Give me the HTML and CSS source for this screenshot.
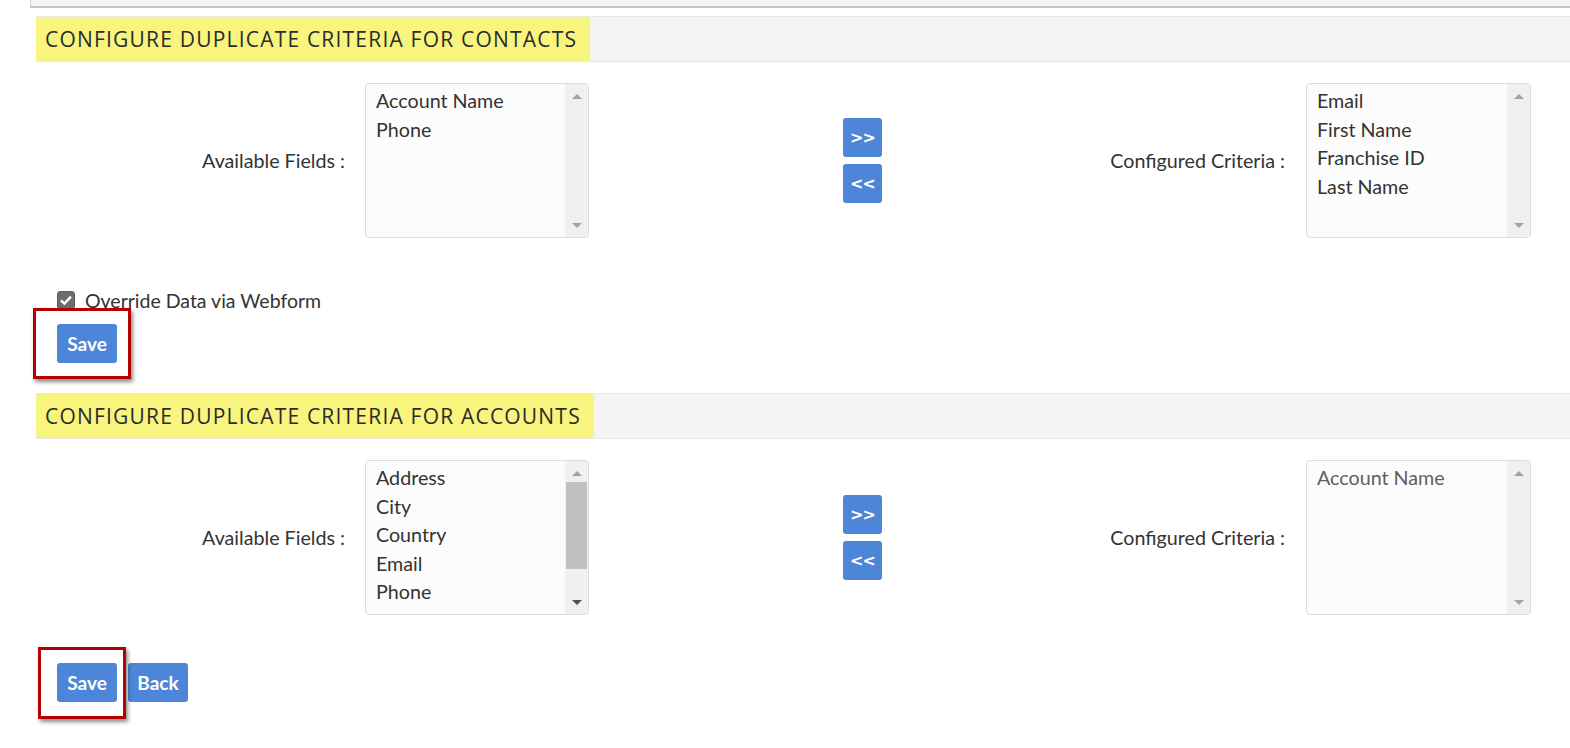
FILE: index.html
```html
<!DOCTYPE html>
<html>
<head>
<meta charset="utf-8">
<link rel="stylesheet" href="styles.css">
</head>
<body>
<div class="topstrip"></div>
<div class="page">
  <div class="header"><span class="hl">CONFIGURE DUPLICATE CRITERIA FOR CONTACTS</span></div>
  <div class="row">
    <div class="label left-label">Available Fields :</div>
    <div class="listbox">
      <div class="items">
        <div class="opt">Account Name</div>
        <div class="opt">Phone</div>
      </div>
      <div class="sbar"><span class="up"></span><span class="fill"></span><span class="down"></span></div>
    </div>
    <div class="movers">
      <button class="btn mv">&gt;&gt;</button>
      <button class="btn mv">&lt;&lt;</button>
    </div>
    <div class="label right-label">Configured Criteria :</div>
    <div class="listbox wide">
      <div class="items">
        <div class="opt">Email</div>
        <div class="opt">First Name</div>
        <div class="opt">Franchise ID</div>
        <div class="opt">Last Name</div>
      </div>
      <div class="sbar"><span class="up"></span><span class="fill"></span><span class="down"></span></div>
    </div>
  </div>
  <div class="check-row">
    <span class="checkbox"><svg viewBox="0 0 18 18" width="18" height="18"><rect x="0.5" y="0.5" width="17" height="17" rx="2.5" fill="#6d6d6d" stroke="#5f5f5f"/><path d="M4 9.3 L7.4 12.6 L14 5.6" fill="none" stroke="#fff" stroke-width="2.4"/></svg></span>
    <span class="check-label">Override Data via Webform</span>
  </div>
  <div class="actions first">
    <button class="btn big">Save</button>
    <div class="annot annot1"></div>
  </div>

  <div class="header second"><span class="hl">CONFIGURE DUPLICATE CRITERIA FOR ACCOUNTS</span></div>
  <div class="row">
    <div class="label left-label">Available Fields :</div>
    <div class="listbox">
      <div class="items">
        <div class="opt">Address</div>
        <div class="opt">City</div>
        <div class="opt">Country</div>
        <div class="opt">Email</div>
        <div class="opt">Phone</div>
      </div>
      <div class="sbar active"><span class="up"></span><span class="fill"><span class="thumb"></span></span><span class="down"></span></div>
    </div>
    <div class="movers">
      <button class="btn mv">&gt;&gt;</button>
      <button class="btn mv">&lt;&lt;</button>
    </div>
    <div class="label right-label">Configured Criteria :</div>
    <div class="listbox wide">
      <div class="items">
        <div class="opt muted">Account Name</div>
      </div>
      <div class="sbar"><span class="up"></span><span class="fill"></span><span class="down"></span></div>
    </div>
  </div>
  <div class="actions last">
    <button class="btn big">Save</button>
    <button class="btn big">Back</button>
    <div class="annot annot2"></div>
  </div>
</div>
</body>
</html>
```
FILE: styles.css
```css
html, body {
  margin: 0;
  padding: 0;
  background: #ffffff;
}
body {
  font-family: Lato, "Open Sans", sans-serif;
  color: #333333;
  font-size: 19.7px;
  width: 1570px;
  height: 748px;
  overflow: hidden;
}
.topstrip {
  margin-left: 30px;
  height: 6px;
  background: #f4f4f4;
  border-left: 1px solid #cfcfcf;
  border-bottom: 2px solid #c4c4c4;
}
.page {
  position: relative;
  margin-left: 36px;
}
.header {
  margin-top: 8px;
  height: 44px;
  background: #f4f4f4;
  border-top: 1px solid #e8e8e8;
  border-bottom: 1px solid #e8e8e8;
}
.header.second {
  margin-top: 30px;
}
.hl {
  display: inline-block;
  height: 44px;
  line-height: 44px;
  background: #f7f57e;
  padding: 0 13px 0 9px;
  font-family: "Open Sans", sans-serif;
  font-weight: 400;
  font-size: 21px;
  color: #2b2b2b;
  letter-spacing: 1.2px;
}
.row {
  display: flex;
  align-items: center;
  margin-top: 21px;
}
.label {
  text-align: right;
  font-size: 19.7px;
  color: #333;
}
.left-label {
  width: 309px;
  margin-right: 20px;
}
.right-label {
  width: 403px;
  margin-right: 21px;
}
.listbox {
  display: flex;
  width: 224px;
  height: 155px;
  box-sizing: border-box;
  border: 1px solid #dcdcdc;
  border-radius: 4px;
  background: #fcfcfc;
  overflow: hidden;
}
.listbox.wide {
  width: 225px;
}
.items {
  flex: 1;
  padding: 3px 0 0 10px;
}
.opt {
  height: 28.5px;
  line-height: 28.5px;
  font-size: 19.7px;
  color: #333;
  white-space: nowrap;
}
.opt.muted {
  color: #5f5f5f;
}
.sbar {
  width: 23px;
  background: #f0f0f0;
  display: flex;
  flex-direction: column;
  align-items: center;
}
.sbar .up, .sbar .down {
  height: 18px;
  width: 100%;
  display: flex;
  align-items: center;
  justify-content: center;
  position: relative;
}
.sbar .up::after {
  content: "";
  border-left: 5px solid transparent;
  border-right: 5px solid transparent;
  border-bottom: 5px solid #a3a3a3;
}
.sbar .down::after {
  content: "";
  border-left: 5px solid transparent;
  border-right: 5px solid transparent;
  border-top: 5px solid #a3a3a3;
}
.sbar.active .down::after {
  border-top-color: #505050;
}
.sbar .up { margin-top: 3px; }
.sbar .down { margin-bottom: 3px; }
.sbar .fill {
  flex: 1;
  width: 100%;
  display: flex;
  justify-content: center;
}
.thumb {
  display: block;
  width: 21px;
  height: 87px;
  background: #c1c1c1;
}
.movers {
  margin-left: 254px;
  display: flex;
  flex-direction: column;
  gap: 7px;
}
.btn {
  font-family: Lato, sans-serif;
  background: #4d86d8;
  color: #ffffff;
  border: none;
  border-radius: 3px;
  padding: 0;
  cursor: pointer;
}
.btn.mv {
  width: 39px;
  height: 39px;
  font-size: 16px;
  font-weight: 700;
  font-family: "DejaVu Sans", sans-serif;
  letter-spacing: -1px;
}
.check-row {
  display: flex;
  align-items: center;
  margin-top: 52px;
  margin-left: 21px;
  height: 20px;
}
.checkbox {
  width: 18px;
  height: 18px;
  display: inline-flex;
}
.check-label {
  margin-left: 10px;
  font-size: 19.5px;
  color: #333;
}
.actions {
  position: relative;
  display: flex;
  gap: 11px;
  margin-left: 21px;
}
.actions.first {
  margin-top: 14px;
}
.actions.last {
  margin-top: 48px;
}
.btn.big {
  width: 60px;
  height: 39px;
  font-size: 19px;
  font-weight: 700;
}
.annot {
  position: absolute;
  border: 3px solid #b40000;
  box-shadow: 2px 3px 4px rgba(0, 0, 0, 0.45);
  box-sizing: border-box;
  pointer-events: none;
}
.annot1 {
  left: -24px;
  top: -16px;
  width: 98px;
  height: 71px;
}
.annot2 {
  left: -19px;
  top: -16px;
  width: 88px;
  height: 72px;
}
```
